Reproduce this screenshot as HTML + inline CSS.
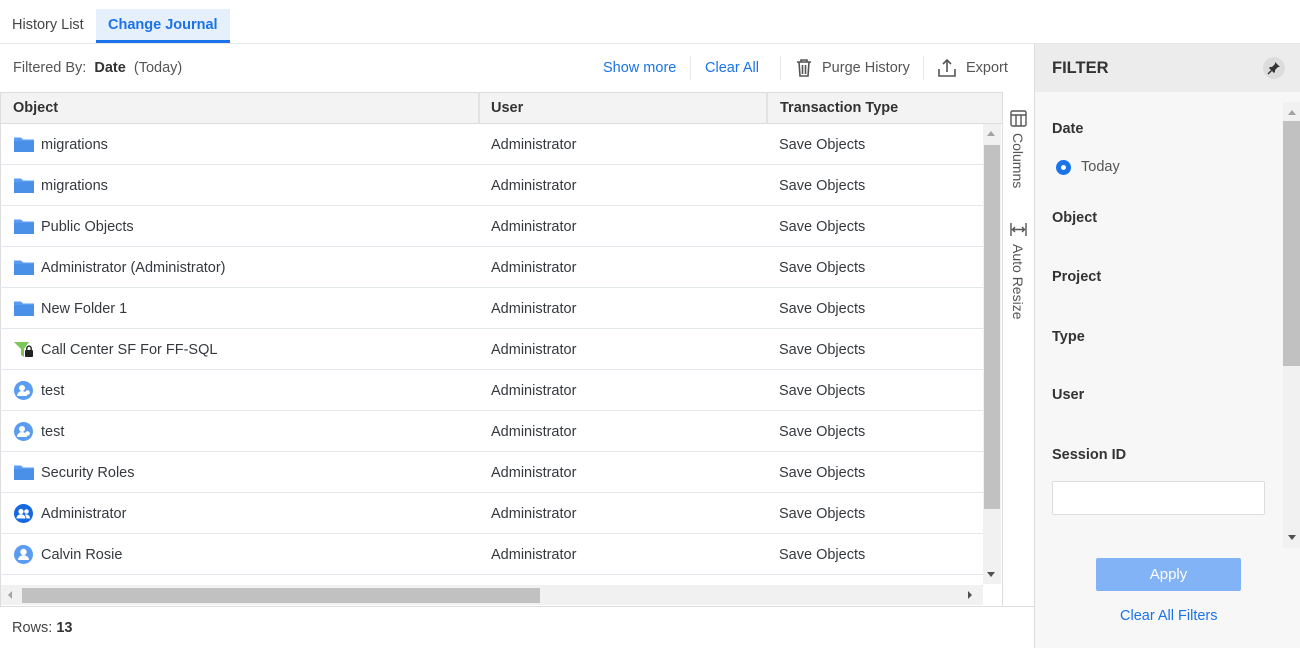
<!DOCTYPE html>
<html><head><meta charset="utf-8"><style>
*{margin:0;padding:0;box-sizing:border-box}
body{width:1300px;height:648px;overflow:hidden;background:#fff;font-family:"Liberation Sans",Arial,sans-serif;font-size:14.5px;color:#35393e;position:relative}
.a{position:absolute}
.t{white-space:nowrap}
.b{font-weight:bold}
.blue{color:#1a73e8}
.row{position:absolute;left:0;width:983px;height:41px;border-bottom:1px solid #e3e7ee}
.row span{position:absolute;top:13px;white-space:nowrap}
.ic{position:absolute;left:14px;top:12px}
</style></head><body>
<!-- tabs -->
<div class="a t" style="left:12px;top:17px;color:#444">History List</div>
<div class="a" style="left:96px;top:9px;width:134px;height:34px;background:#e6f0fd;border-bottom:3px solid #1a73e8"></div>
<div class="a t b" style="left:108px;top:17px;color:#1a73e8">Change Journal</div>
<div class="a" style="left:0;top:43px;width:1300px;height:1px;background:#e8e8e8"></div>
<!-- filter bar -->
<div class="a t" style="left:13px;top:60px;color:#555">Filtered By:&nbsp; <b style="color:#333">Date</b>&nbsp; (Today)</div>
<div class="a t blue" style="left:603px;top:60px">Show more</div>
<div class="a" style="left:690px;top:56px;width:1px;height:24px;background:#e6e6e6"></div>
<div class="a t blue" style="left:705px;top:60px">Clear All</div>
<div class="a" style="left:780px;top:56px;width:1px;height:24px;background:#e6e6e6"></div>
<svg class="a" style="left:795px;top:58px" width="18" height="20" viewBox="0 0 18 20" fill="none" stroke="#555" stroke-width="1.6"><path d="M2 4h14M6 4V2h6v2M4 4l1 14h8l1-14M7.5 7v9M10.5 7v9"/></svg>
<div class="a t" style="left:822px;top:60px;color:#555">Purge History</div>
<div class="a" style="left:923px;top:56px;width:1px;height:24px;background:#e6e6e6"></div>
<svg class="a" style="left:937px;top:58px" width="20" height="20" viewBox="0 0 20 20" fill="none" stroke="#555" stroke-width="1.6"><path d="M10 14V2M6 6l4-4 4 4M2 11v7h16v-7"/></svg>
<div class="a t" style="left:966px;top:60px;color:#555">Export</div>
<!-- table header -->
<div class="a" style="left:0;top:92px;width:1002px;height:32px;background:#f3f3f3;border-top:1px solid #ddd;border-bottom:1px solid #ddd;border-left:1px solid #ddd"></div>
<div class="a" style="left:478px;top:93px;width:2px;height:30px;background:#e2e2e2"></div>
<div class="a" style="left:766px;top:93px;width:2px;height:30px;background:#e2e2e2"></div>
<div class="a t b" style="left:13px;top:100px;color:#333">Object</div>
<div class="a t b" style="left:491px;top:100px;color:#333">User</div>
<div class="a t b" style="left:780px;top:100px;color:#333">Transaction Type</div>
<div class="a" style="left:0;top:124px;width:1px;height:482px;background:#ddd"></div>
<!-- rows -->
<div id="rows"></div>
<script>
var F='<svg class="ic" width="20" height="16" viewBox="0 0 20 16"><path d="M0 1.5h7l2 2h11v12H0z" fill="#5a9df0"/><path d="M0 5h20v11H0z" fill="#4a90e8"/></svg>';
var U='<svg class="ic" width="19" height="19" viewBox="0 0 19 19" style="top:11px"><circle cx="9.5" cy="9.5" r="9.5" fill="#5a9df0"/><circle cx="8" cy="7" r="3" fill="#fff"/><path d="M3 15c0-3 2.5-5 5-5s5 2 5 5z" fill="#fff"/><circle cx="13.5" cy="11.5" r="2.3" fill="#fff"/></svg>';
var G='<svg class="ic" width="19" height="19" viewBox="0 0 19 19" style="top:11px"><circle cx="9.5" cy="9.5" r="9.5" fill="#1668e0"/><circle cx="7" cy="7.5" r="2.6" fill="#fff"/><circle cx="12.5" cy="7.5" r="2.3" fill="#fff"/><path d="M2.5 14.5c0-2.8 2-4.3 4.5-4.3s4.5 1.5 4.5 4.3zM11 10.3c2.5 0 5 1.2 5 4.2h-3.5z" fill="#fff"/></svg>';
var P='<svg class="ic" width="19" height="19" viewBox="0 0 19 19" style="top:11px"><circle cx="9.5" cy="9.5" r="9.5" fill="#5a9df0"/><circle cx="9.5" cy="7" r="3.2" fill="#fff"/><path d="M4 15c0-3 2.5-4.8 5.5-4.8S15 12 15 15z" fill="#fff"/></svg>';
var C='<svg class="ic" width="20" height="18" viewBox="0 0 20 18"><path d="M0 1h15l-5 7v8l-3-2V8z" fill="#7cc65a"/><rect x="11" y="9" width="8" height="7" rx="1" fill="#222"/><path d="M12.8 9V7.3a2.2 2.2 0 014.4 0V9" stroke="#222" stroke-width="1.4" fill="none"/></svg>';
var d=[[F,'migrations'],[F,'migrations'],[F,'Public Objects'],[F,'Administrator (Administrator)'],[F,'New Folder 1'],[C,'Call Center SF For FF-SQL'],[U,'test'],[U,'test'],[F,'Security Roles'],[G,'Administrator'],[P,'Calvin Rosie']];
var h='';d.forEach(function(r,i){h+='<div class="row" style="top:'+(124+i*41)+'px">'+r[0]+'<span style="left:41px">'+r[1]+'</span><span style="left:491px">Administrator</span><span style="left:779px">Save Objects</span></div>';});
document.getElementById('rows').innerHTML=h;
</script>
<!-- vertical scrollbar -->
<div class="a" style="left:983px;top:124px;width:18px;height:460px;background:#f1f1f1"></div>
<div class="a" style="left:984px;top:145px;width:16px;height:364px;background:#c1c1c1"></div>
<div class="a" style="left:987px;top:131px;width:0;height:0;border-left:4px solid transparent;border-right:4px solid transparent;border-bottom:5px solid #a3a3a3"></div>
<div class="a" style="left:987px;top:572px;width:0;height:0;border-left:4px solid transparent;border-right:4px solid transparent;border-top:5px solid #505050"></div>
<!-- horizontal scrollbar -->
<div class="a" style="left:1px;top:585px;width:982px;height:20px;background:#f1f1f1"></div>
<div class="a" style="left:22px;top:588px;width:518px;height:15px;background:#c1c1c1"></div>
<div class="a" style="left:8px;top:591px;border-top:4px solid transparent;border-bottom:4px solid transparent;border-right:4px solid #a3a3a3"></div>
<div class="a" style="left:968px;top:591px;border-top:4px solid transparent;border-bottom:4px solid transparent;border-left:4px solid #505050"></div>
<!-- side tool panel -->
<div class="a" style="left:1002px;top:92px;width:1px;height:514px;background:#ddd"></div>
<svg class="a" style="left:1010px;top:110px" width="17" height="17" viewBox="0 0 17 17" fill="none" stroke="#555" stroke-width="1.4"><rect x="1" y="1" width="15" height="15" rx="1.5"/><path d="M1 5h15M6 5v11M11 5v11"/></svg>
<div class="a t" style="left:1010px;top:133px;writing-mode:vertical-rl;color:#555;font-size:14px">Columns</div>
<svg class="a" style="left:1010px;top:222px" width="17" height="15" viewBox="0 0 17 15" fill="none" stroke="#555" stroke-width="1.4"><path d="M1 1v13M16 1v13M3 7.5h11M5 5l-2.5 2.5L5 10M12 5l2.5 2.5L12 10"/></svg>
<div class="a t" style="left:1010px;top:244px;writing-mode:vertical-rl;color:#555;font-size:14px">Auto Resize</div>
<!-- bottom bar -->
<div class="a" style="left:0;top:606px;width:1035px;height:1px;background:#ddd"></div>
<div class="a t" style="left:12px;top:620px;color:#444">Rows: <b style="color:#333">13</b></div>
<!-- filter panel -->
<div class="a" style="left:1034px;top:44px;width:266px;height:604px;background:#f7f7f7;border-left:1px solid #ddd"></div>
<div class="a" style="left:1035px;top:44px;width:265px;height:48px;background:#ececec"></div>
<div class="a t b" style="left:1052px;top:59px;font-size:16.5px;color:#333">FILTER</div>
<div class="a" style="left:1263px;top:57px;width:22px;height:22px;border-radius:50%;background:#dcdcdc"></div>
<svg class="a" style="left:1267px;top:61px" width="14" height="14" viewBox="0 0 14 14"><path d="M8 1l5 5-2 0-3 3 0 2-1 1-5-5 1-1 2 0 3-3z" fill="#333"/><path d="M4.5 9.5L1 13" stroke="#333" stroke-width="1.4"/></svg>
<div class="a" style="left:1283px;top:102px;width:17px;height:446px;background:#f1f1f1"></div>
<div class="a" style="left:1283px;top:121px;width:17px;height:245px;background:#c1c1c1"></div>
<div class="a" style="left:1288px;top:110px;border-left:4px solid transparent;border-right:4px solid transparent;border-bottom:5px solid #a3a3a3"></div>
<div class="a" style="left:1288px;top:535px;border-left:4px solid transparent;border-right:4px solid transparent;border-top:5px solid #505050"></div>
<div class="a t b" style="left:1052px;top:121px;color:#333">Date</div>
<div class="a" style="left:1056px;top:160px;width:15px;height:15px;border-radius:50%;background:#1a73e8"></div>
<div class="a" style="left:1061px;top:165px;width:5px;height:5px;border-radius:50%;background:#fff"></div>
<div class="a t" style="left:1081px;top:159px;color:#555">Today</div>
<div class="a t b" style="left:1052px;top:210px;color:#333">Object</div>
<div class="a t b" style="left:1052px;top:269px;color:#333">Project</div>
<div class="a t b" style="left:1052px;top:329px;color:#333">Type</div>
<div class="a t b" style="left:1052px;top:387px;color:#333">User</div>
<div class="a t b" style="left:1052px;top:447px;color:#333">Session ID</div>
<div class="a" style="left:1052px;top:481px;width:213px;height:34px;background:#fff;border:1px solid #ddd;border-radius:2px"></div>
<div class="a" style="left:1096px;top:558px;width:145px;height:33px;background:#82b3f7;border-radius:2px;color:#fff;text-align:center;line-height:33px;font-size:15px">Apply</div>
<div class="a t blue" style="left:1120px;top:608px">Clear All Filters</div>
</body></html>
